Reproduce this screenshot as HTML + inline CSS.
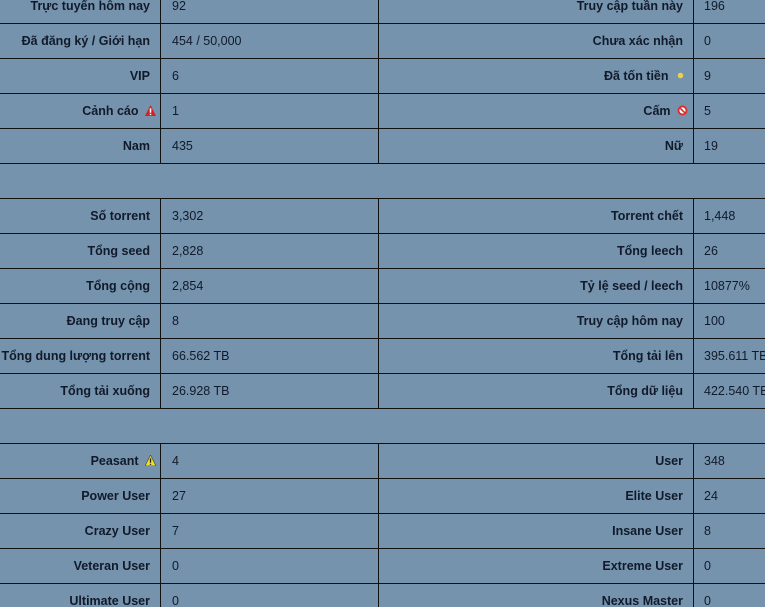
<!DOCTYPE html>
<html><head><meta charset="utf-8"><style>
html,body{margin:0;width:765px;height:607px;overflow:hidden}
body{background:#7593ad;font-family:"Liberation Sans",sans-serif;font-size:12.5px;color:#111a2a;position:relative}
.h{position:absolute;left:0;width:765px;height:1px;background:#111}
.v{position:absolute;width:1px;background:#111}
.t{position:absolute;height:35px;line-height:37px;white-space:nowrap}
.l1{right:615px;font-weight:bold}
.v1{left:172px}
.l2{right:82px;font-weight:bold}
.v2{left:704px}
.ic{display:inline-block;width:11px;height:11px;vertical-align:-1px;margin-left:3px}
</style></head><body>
<div class="h" style="top:23px"></div><div class="h" style="top:58px"></div><div class="h" style="top:93px"></div><div class="h" style="top:128px"></div><div class="h" style="top:163px"></div>
<div class="h" style="top:198px"></div><div class="h" style="top:233px"></div><div class="h" style="top:268px"></div><div class="h" style="top:303px"></div><div class="h" style="top:338px"></div><div class="h" style="top:373px"></div><div class="h" style="top:408px"></div>
<div class="h" style="top:443px"></div><div class="h" style="top:478px"></div><div class="h" style="top:513px"></div><div class="h" style="top:548px"></div><div class="h" style="top:583px"></div>
<div class="v" style="left:160px;top:0;height:163px"></div><div class="v" style="left:378px;top:0;height:163px"></div><div class="v" style="left:693px;top:0;height:163px"></div>
<div class="v" style="left:160px;top:198px;height:210px"></div><div class="v" style="left:378px;top:198px;height:210px"></div><div class="v" style="left:693px;top:198px;height:210px"></div>
<div class="v" style="left:160px;top:443px;height:164px"></div><div class="v" style="left:378px;top:443px;height:164px"></div><div class="v" style="left:693px;top:443px;height:164px"></div>

<div class="t l1" style="top:-12px">Trực tuyến hôm nay</div><div class="t v1" style="top:-12px">92</div><div class="t l2" style="top:-12px">Truy cập tuần này</div><div class="t v2" style="top:-12px">196</div>
<div class="t l1" style="top:23px">Đã đăng ký / Giới hạn</div><div class="t v1" style="top:23px">454 / 50,000</div><div class="t l2" style="top:23px">Chưa xác nhận</div><div class="t v2" style="top:23px">0</div>
<div class="t l1" style="top:58px">VIP</div><div class="t v1" style="top:58px">6</div><div class="t l2" style="top:58px;right:79px">Đã tốn tiền <svg class="ic" viewBox="0 0 10 10"><circle cx="5" cy="5" r="2.5" fill="#e8d050"/></svg></div><div class="t v2" style="top:58px">9</div>
<div class="t l1" style="top:93px;right:609px">Cảnh cáo <svg class="ic" viewBox="0 0 10 10"><path d="M5 0L10 10H0Z" fill="#d32020"/><rect x="4.3" y="3" width="1.4" height="4" fill="#fff"/><rect x="4.3" y="8" width="1.4" height="1.2" fill="#fff"/></svg></div><div class="t v1" style="top:93px">1</div>
<div class="t l2" style="top:93px;right:77px">Cấm <svg class="ic" viewBox="0 0 10 10"><circle cx="5" cy="5" r="4.5" fill="#d83030"/><circle cx="5" cy="5" r="2.8" fill="#fff"/><path d="M3 3L7 7" stroke="#d83030" stroke-width="1.5"/></svg></div><div class="t v2" style="top:93px">5</div>
<div class="t l1" style="top:128px">Nam</div><div class="t v1" style="top:128px">435</div><div class="t l2" style="top:128px">Nữ</div><div class="t v2" style="top:128px">19</div>

<div class="t l1" style="top:198px">Số torrent</div><div class="t v1" style="top:198px">3,302</div><div class="t l2" style="top:198px">Torrent chết</div><div class="t v2" style="top:198px">1,448</div>
<div class="t l1" style="top:233px">Tổng seed</div><div class="t v1" style="top:233px">2,828</div><div class="t l2" style="top:233px">Tổng leech</div><div class="t v2" style="top:233px">26</div>
<div class="t l1" style="top:268px">Tổng cộng</div><div class="t v1" style="top:268px">2,854</div><div class="t l2" style="top:268px">Tỷ lệ seed / leech</div><div class="t v2" style="top:268px">10877%</div>
<div class="t l1" style="top:303px">Đang truy cập</div><div class="t v1" style="top:303px">8</div><div class="t l2" style="top:303px">Truy cập hôm nay</div><div class="t v2" style="top:303px">100</div>
<div class="t l1" style="top:338px">Tổng dung lượng torrent</div><div class="t v1" style="top:338px">66.562 TB</div><div class="t l2" style="top:338px">Tổng tải lên</div><div class="t v2" style="top:338px">395.611 TB</div>
<div class="t l1" style="top:373px">Tổng tải xuống</div><div class="t v1" style="top:373px">26.928 TB</div><div class="t l2" style="top:373px">Tổng dữ liệu</div><div class="t v2" style="top:373px">422.540 TB</div>

<div class="t l1" style="top:443px;right:609px">Peasant <svg class="ic" viewBox="0 0 10 10"><path d="M5 0L10 10H0Z" fill="#f0e020" stroke="#444" stroke-width=".6"/><rect x="4.4" y="3" width="1.2" height="4" fill="#222"/><rect x="4.4" y="8" width="1.2" height="1" fill="#222"/></svg></div><div class="t v1" style="top:443px">4</div><div class="t l2" style="top:443px">User</div><div class="t v2" style="top:443px">348</div>
<div class="t l1" style="top:478px">Power User</div><div class="t v1" style="top:478px">27</div><div class="t l2" style="top:478px">Elite User</div><div class="t v2" style="top:478px">24</div>
<div class="t l1" style="top:513px">Crazy User</div><div class="t v1" style="top:513px">7</div><div class="t l2" style="top:513px">Insane User</div><div class="t v2" style="top:513px">8</div>
<div class="t l1" style="top:548px">Veteran User</div><div class="t v1" style="top:548px">0</div><div class="t l2" style="top:548px">Extreme User</div><div class="t v2" style="top:548px">0</div>
<div class="t l1" style="top:583px">Ultimate User</div><div class="t v1" style="top:583px">0</div><div class="t l2" style="top:583px">Nexus Master</div><div class="t v2" style="top:583px">0</div>
</body></html>
